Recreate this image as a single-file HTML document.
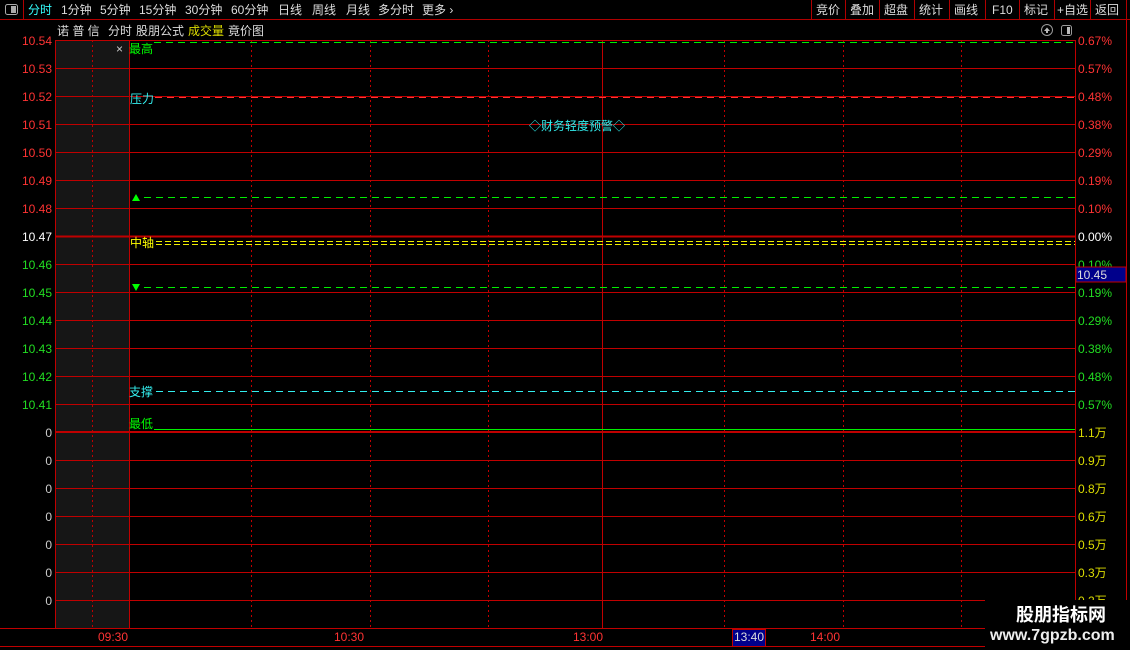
<!DOCTYPE html>
<html><head><meta charset="utf-8"><style>
html,body{margin:0;padding:0;background:#000;width:1130px;height:650px;overflow:hidden}
svg{display:block}
text{font-family:"Liberation Sans","Noto Sans CJK SC",sans-serif;font-size:12px}
</style></head><body>
<svg width="1130" height="650" viewBox="0 0 1130 650" xmlns="http://www.w3.org/2000/svg">
<rect width="1130" height="650" fill="#000"/>
<line x1="0" y1="19.5" x2="1130" y2="19.5" stroke="#b00000"/>
<line x1="23.5" y1="0" x2="23.5" y2="19" stroke="#b00000"/>
<rect x="5.5" y="4.5" width="12" height="10" rx="2" fill="none" stroke="#aaa"/>
<rect x="11" y="6" width="5" height="7" fill="#aaa"/>
<g fill="#ddd">
<text x="28" y="14" fill="#3ff">分时</text>
<text x="61" y="14">1分钟</text>
<text x="100" y="14">5分钟</text>
<text x="139" y="14">15分钟</text>
<text x="185" y="14">30分钟</text>
<text x="231" y="14">60分钟</text>
<text x="278" y="14">日线</text>
<text x="312" y="14">周线</text>
<text x="346" y="14">月线</text>
<text x="378" y="14">多分时</text>
<text x="422" y="14">更多 ›</text>
</g>
<g stroke="#b00000">
<line x1="811.5" y1="0" x2="811.5" y2="19"/><line x1="845.5" y1="0" x2="845.5" y2="19"/>
<line x1="879.5" y1="0" x2="879.5" y2="19"/><line x1="914.5" y1="0" x2="914.5" y2="19"/>
<line x1="949.5" y1="0" x2="949.5" y2="19"/><line x1="985.5" y1="0" x2="985.5" y2="19"/>
<line x1="1019.5" y1="0" x2="1019.5" y2="19"/><line x1="1054.5" y1="0" x2="1054.5" y2="19"/>
<line x1="1090.5" y1="0" x2="1090.5" y2="19"/><line x1="1126.5" y1="0" x2="1126.5" y2="19"/>
</g>
<g fill="#ddd">
<text x="816" y="14">竞价</text><text x="850" y="14">叠加</text><text x="884" y="14">超盘</text>
<text x="919" y="14">统计</text><text x="954" y="14">画线</text><text x="992" y="14">F10</text>
<text x="1024" y="14">标记</text><text x="1057" y="14">+自选</text><text x="1095" y="14">返回</text>
</g>
<g fill="#ddd"><text x="57" y="35">诺 普 信</text><text x="108" y="35">分时</text><text x="136" y="35">股朋公式</text>
<text x="188" y="35" fill="#dd0">成交量</text><text x="228" y="35">竟价图</text></g>
<circle cx="1047" cy="30" r="5.5" fill="none" stroke="#999"/><path d="M1044 31 L1047 27.5 L1050 31 Z M1046 30 h2 v3 h-2z" fill="#bbb"/>
<rect x="1061.5" y="25.5" width="10" height="10" rx="2" fill="none" stroke="#999"/><rect x="1067" y="27" width="3" height="7" fill="#bbb"/>
<rect x="55" y="40" width="74" height="588" fill="#161616"/>
<g stroke="#c00000" stroke-width="1">
<line x1="55" y1="40.5" x2="1075" y2="40.5"/>
<line x1="55" y1="68.5" x2="1075" y2="68.5"/><line x1="55" y1="96.5" x2="1075" y2="96.5"/>
<line x1="55" y1="124.5" x2="1075" y2="124.5"/><line x1="55" y1="152.5" x2="1075" y2="152.5"/>
<line x1="55" y1="180.5" x2="1075" y2="180.5"/><line x1="55" y1="208.5" x2="1075" y2="208.5"/>
<line x1="55" y1="236.5" x2="1075" y2="236.5" stroke-width="2"/><line x1="55" y1="264.5" x2="1075" y2="264.5"/>
<line x1="55" y1="292.5" x2="1075" y2="292.5"/><line x1="55" y1="320.5" x2="1075" y2="320.5"/>
<line x1="55" y1="348.5" x2="1075" y2="348.5"/><line x1="55" y1="376.5" x2="1075" y2="376.5"/>
<line x1="55" y1="404.5" x2="1075" y2="404.5"/><line x1="55" y1="432" x2="1075" y2="432" stroke-width="2"/>
<line x1="55" y1="460.5" x2="1075" y2="460.5"/><line x1="55" y1="488.5" x2="1075" y2="488.5"/>
<line x1="55" y1="516.5" x2="1075" y2="516.5"/><line x1="55" y1="544.5" x2="1075" y2="544.5"/>
<line x1="55" y1="572.5" x2="1075" y2="572.5"/><line x1="55" y1="600.5" x2="1075" y2="600.5"/>
<line x1="0" y1="628.5" x2="1130" y2="628.5"/><line x1="0" y1="646.5" x2="1130" y2="646.5"/>
<line x1="55.5" y1="40" x2="55.5" y2="628"/><line x1="129.5" y1="40" x2="129.5" y2="628"/>
<line x1="602.5" y1="40" x2="602.5" y2="628"/>
<line x1="1075.5" y1="40" x2="1075.5" y2="628"/><line x1="1126.5" y1="20" x2="1126.5" y2="628"/>
</g>
<g stroke="#c00000" stroke-dasharray="2,3">
<line x1="92.5" y1="40" x2="92.5" y2="628"/><line x1="251.5" y1="40" x2="251.5" y2="628"/>
<line x1="370.5" y1="40" x2="370.5" y2="628"/><line x1="488.5" y1="40" x2="488.5" y2="628"/>
<line x1="724.5" y1="40" x2="724.5" y2="628"/><line x1="843.5" y1="40" x2="843.5" y2="628"/>
<line x1="961.5" y1="40" x2="961.5" y2="628"/>
</g>
<line x1="154" y1="42.5" x2="1075" y2="42.5" stroke="#0e0" stroke-dasharray="7,5"/>
<line x1="155" y1="97.5" x2="1075" y2="97.5" stroke="#f33" stroke-dasharray="7,5"/>
<line x1="144" y1="197.5" x2="1075" y2="197.5" stroke="#0e0" stroke-dasharray="7,5"/>
<line x1="156" y1="241.5" x2="1075" y2="241.5" stroke="#ee0" stroke-dasharray="6,3"/>
<line x1="156" y1="244.5" x2="1075" y2="244.5" stroke="#ee0" stroke-dasharray="6,3"/>
<line x1="144" y1="287.5" x2="1075" y2="287.5" stroke="#0e0" stroke-dasharray="7,5"/>
<line x1="156" y1="391.5" x2="1075" y2="391.5" stroke="#3ee" stroke-dasharray="7,5"/>
<line x1="154" y1="429.5" x2="1075" y2="429.5" stroke="#0e0"/>
<text x="116" y="53" fill="#ccc">×</text>
<text x="129" y="53" fill="#0f0">最高</text>
<text x="130" y="103" fill="#3ee">压力</text>
<path d="M132 201 L136 194 L140 201 Z" fill="#0f0"/>
<text x="130" y="247" fill="#ff0">中轴</text>
<path d="M132 284 L140 284 L136 291 Z" fill="#0f0"/>
<text x="129" y="396" fill="#3ee">支撑</text>
<text x="129" y="428" fill="#0f0">最低</text>
<text x="529" y="130" fill="#3ee">◇财务轻度预警◇</text>
<g text-anchor="end">
<g fill="#f33"><text x="52" y="45">10.54</text><text x="52" y="73">10.53</text><text x="52" y="101">10.52</text>
<text x="52" y="129">10.51</text><text x="52" y="157">10.50</text><text x="52" y="185">10.49</text><text x="52" y="213">10.48</text></g>
<text x="52" y="241" fill="#fff">10.47</text>
<g fill="#2d2"><text x="52" y="269">10.46</text><text x="52" y="297">10.45</text><text x="52" y="325">10.44</text>
<text x="52" y="353">10.43</text><text x="52" y="381">10.42</text><text x="52" y="409">10.41</text></g>
<g fill="#ccc"><text x="52" y="437">0</text><text x="52" y="465">0</text><text x="52" y="493">0</text>
<text x="52" y="521">0</text><text x="52" y="549">0</text><text x="52" y="577">0</text><text x="52" y="605">0</text></g>
</g>
<g fill="#f33"><text x="1078" y="45">0.67%</text><text x="1078" y="73">0.57%</text><text x="1078" y="101">0.48%</text>
<text x="1078" y="129">0.38%</text><text x="1078" y="157">0.29%</text><text x="1078" y="185">0.19%</text><text x="1078" y="213">0.10%</text></g>
<text x="1078" y="241" fill="#fff">0.00%</text>
<g fill="#2d2"><text x="1078" y="269">0.10%</text><text x="1078" y="297">0.19%</text><text x="1078" y="325">0.29%</text>
<text x="1078" y="353">0.38%</text><text x="1078" y="381">0.48%</text><text x="1078" y="409">0.57%</text></g>
<rect x="1076" y="267" width="50" height="15" fill="#00008b" stroke="#c00000"/>
<text x="1077" y="279" fill="#ddd">10.45</text>
<g fill="#dd0"><text x="1078" y="437">1.1万</text><text x="1078" y="465">0.9万</text><text x="1078" y="493">0.8万</text>
<text x="1078" y="521">0.6万</text><text x="1078" y="549">0.5万</text><text x="1078" y="577">0.3万</text><text x="1078" y="605">0.2万</text></g>
<g fill="#f33"><text x="98" y="641">09:30</text><text x="334" y="641">10:30</text><text x="573" y="641">13:00</text><text x="810" y="641">14:00</text></g>
<rect x="732.5" y="629.5" width="33" height="17" fill="#00008b" stroke="#c00000"/>
<text x="734" y="641" fill="#ddd">13:40</text>
<rect x="985" y="600" width="145" height="50" fill="#000"/>
<text x="1016" y="621" fill="#fff" style="font-size:18px;font-weight:bold">股朋指标网</text>
<text x="990" y="640" fill="#eee" style="font-size:16px;font-weight:bold">www.7gpzb.com</text>
</svg>
</body></html>
